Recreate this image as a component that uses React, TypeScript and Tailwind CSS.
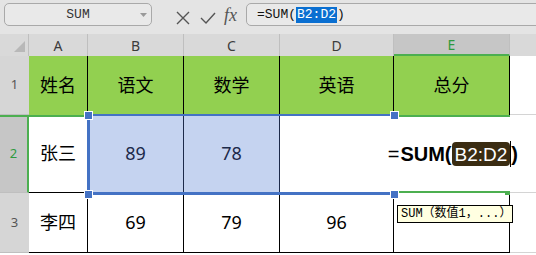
import React from "react";

const cjk = { fontFamily: '"Noto Sans", "Noto Sans CJK SC", sans-serif' };
const mono = { fontFamily: '"Liberation Mono", "Noto Sans CJK SC", monospace' };

function Handle({ cls }: { cls: string }) {
  return <div className={`absolute w-[9px] h-[9px] bg-[#4472c4] border border-white ${cls}`} />;
}

export default function App() {
  const hdr = "flex items-center justify-center bg-[#d9d9d9] border-r border-[#bfbfbf] text-[14px] text-[#3c3c3c]";
  const rowHdr = "flex items-center justify-center bg-[#d6d6d6] border-b border-[#bfbfbf] text-[13px] text-[#555]";
  const green = "flex items-center justify-center bg-[#92d050] border-r border-black text-[18px] text-black";
  const cell = "flex items-center justify-center bg-white border-r border-b border-black text-[18px] text-black";
  return (
    <div className="w-[536px] h-[255px] overflow-hidden bg-white" style={cjk}>
      {/* toolbar */}
      <div className="h-[34px] bg-[#e4e4e4] flex items-start pt-[3px]">
        <div className="ml-[4px] w-[148px] h-[23px] rounded-[5px] border border-[#a9a9a9] bg-[#e9e9e9] relative flex items-center justify-center">
          <span className="text-[13px] text-[#333]" style={mono}>SUM</span>
          <svg className="absolute right-[4px] top-[9px]" width="7" height="4" viewBox="0 0 7 4">
            <polygon points="0,0 7,0 3.5,4" fill="#9a9a9a" />
          </svg>
        </div>
        <svg className="ml-[23px] mt-[7px]" width="16" height="16" viewBox="0 0 16 16">
          <path d="M2 2 L14 14 M14 2 L2 14" stroke="#555" strokeWidth="1.4" fill="none" />
        </svg>
        <svg className="ml-[8px] mt-[7px]" width="18" height="16" viewBox="0 0 18 16">
          <path d="M2 8 L7 13 L16 3" stroke="#555" strokeWidth="1.4" fill="none" />
        </svg>
        <span className="ml-[7px] mt-[1px] text-[18px] italic text-[#555] leading-[22px]" style={{ fontFamily: '"Liberation Serif", serif' }}>fx</span>
        <div className="ml-[9px] flex-1 -mr-[6px] h-[23px] rounded-l-[5px] border border-[#a9a9a9] bg-[#e9e9e9] flex items-center pl-[10px]">
          <span className="text-[13px] text-[#111] leading-[16px]" style={mono}>=SUM(</span>
          <span className="text-[13px] text-white bg-[#0a6fd1] leading-[16px] px-[1px]" style={mono}>B2:D2</span>
          <span className="text-[13px] text-[#111] leading-[16px]" style={mono}>)</span>
        </div>
      </div>

      {/* sheet */}
      <div className="relative grid grid-cols-[29px_59px_96px_96px_114px_116px_26px] grid-rows-[22px_59px_78px_60px]">
        {/* header row */}
        <div className="bg-[#d9d9d9] border-r border-[#bfbfbf] relative">
          <svg className="absolute left-0 top-0" width="29" height="22" viewBox="0 0 29 22">
            <polygon points="25,7 25,18 14,18" fill="#b8b8b8" />
          </svg>
        </div>
        <div className={hdr}>A</div>
        <div className={hdr}>B</div>
        <div className={hdr}>C</div>
        <div className={hdr}>D</div>
        <div className="flex items-center justify-center bg-[#c6c6c6] border-r border-[#bfbfbf] border-b-2 border-b-[#4caf50] text-[14px] text-[#2e9a3e]">E</div>
        <div className="bg-[#d9d9d9]" />

        {/* row 1 */}
        <div className={rowHdr}>1</div>
        <div className={green}>姓名</div>
        <div className={green}>语文</div>
        <div className={green}>数学</div>
        <div className={green}>英语</div>
        <div className={green}>总分</div>
        <div className="bg-white border-b border-[#d4d4d4]" />

        {/* row 2 */}
        <div className="flex items-center justify-center bg-[#c6c6c6] border-r-2 border-[#4caf50] border-b border-b-[#bfbfbf] text-[13px] text-[#2e9a3e]">2</div>
        <div className={cell}>张三</div>
        <div className="flex items-center justify-center bg-[#c5d3f0] border-r border-b border-[#1d2a4a] text-[18px] text-[#1d2a4a]">89</div>
        <div className="flex items-center justify-center bg-[#c5d3f0] border-r border-b border-[#1d2a4a] text-[18px] text-[#1d2a4a]">78</div>
        <div className={cell} />
        <div className={cell} />
        <div className="bg-white border-b border-[#d4d4d4]" />

        {/* row 3 */}
        <div className={rowHdr}>3</div>
        <div className={cell}>李四</div>
        <div className={cell}>69</div>
        <div className={cell}>79</div>
        <div className={cell}>96</div>
        <div className={cell} />
        <div className="bg-white border-b border-[#d4d4d4]" />

        {/* overlays */}
        <div className="absolute left-0 top-[81px] w-[88px] h-[2px] bg-[#4caf50]" />
        <div className="absolute left-[87px] top-[80px] w-[308px] h-[81px] border-l-[3px] border-t-[2px] border-b-[3px] border-r-[2px] border-[#4472c4]" />
        <div className="absolute left-[394px] top-[81px] w-[116px] h-[78px] border-2 border-[#4caf50]" />
        <div className="absolute left-[505px] top-[156px] w-[5px] h-[5px] bg-[#4caf50]" />
        <div className="absolute left-[281px] top-[83px] w-[240px] h-[74px] bg-white flex items-center justify-end pr-[3px]">
          <span className="text-[20px] text-black leading-none" style={{ fontFamily: '"Liberation Sans", sans-serif' }}>=</span>
          <span className="text-[20px] font-bold text-black leading-none ml-[1px]" style={{ fontFamily: '"Liberation Sans", sans-serif' }}>SUM(</span>
          <span className="text-[19px] text-white bg-[#3a2c12] rounded-[4px] px-[3px] h-[24px] flex items-center leading-none" style={{ fontFamily: '"Liberation Sans", sans-serif' }}>B2:D2</span>
          <span className="w-[1px] h-[26px] bg-black" />
          <span className="text-[20px] font-bold text-black leading-none" style={{ fontFamily: '"Liberation Sans", sans-serif' }}>)</span>
        </div>
        <Handle cls="left-[84px] top-[77px]" />
        <Handle cls="left-[390px] top-[77px]" />
        <Handle cls="left-[84px] top-[156px]" />
        <Handle cls="left-[390px] top-[156px]" />

        <div className="absolute left-[397px] top-[171px] w-[116px] h-[18px] bg-[#ffffe1] border border-black flex items-center pl-[3px] text-[12px] text-black leading-none whitespace-nowrap" style={mono}>
          SUM（数值1，...）
        </div>
      </div>
    </div>
  );
}
